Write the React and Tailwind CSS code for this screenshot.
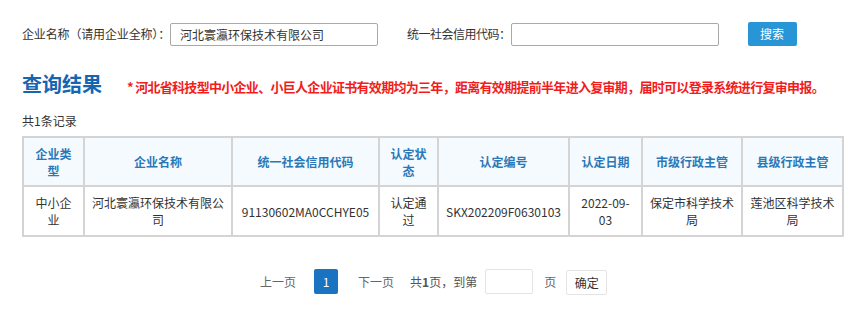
import React from 'react';

const font = { fontFamily: '"Microsoft YaHei","Noto Sans CJK SC","Noto Sans",sans-serif' };

const headers = [
  { label: '企业类型', w: 'w-[61px]' },
  { label: '企业名称', w: 'w-[148px]' },
  { label: '统一社会信用代码', w: 'w-[147px]' },
  { label: '认定状态', w: 'w-[59px]' },
  { label: '认定编号', w: 'w-[131px]' },
  { label: '认定日期', w: 'w-[73px]' },
  { label: '市级行政主管', w: 'w-[100px]' },
  { label: '县级行政主管', w: 'w-[101px]' },
];

const row = [
  '中小企业',
  '河北寰瀛环保技术有限公司',
  '91130602MA0CCHYE05',
  '认定通过',
  'SKX202209F0630103',
  '2022-09-03',
  '保定市科学技术局',
  '莲池区科学技术局',
];

export default function App() {
  return (
    <div className="w-[859px] h-[325px] bg-white text-[12px] text-[#333]" style={font}>
      {/* search bar */}
      <div className="flex items-center pt-[22px] pl-[22px] h-[46px]">
        <span className="shrink-0 whitespace-nowrap tracking-[-0.15px]">企业名称（请用企业全称）：</span>
        <input
          className="w-[208px] h-[23px] border border-[#a9a9a9] rounded-[2px] px-[9px] text-[12px] text-[#333] outline-none"
          defaultValue="河北寰瀛环保技术有限公司"
          style={font}
        />
        <span className="ml-[29px] shrink-0 whitespace-nowrap tracking-[-0.5px]">统一社会信用代码：</span>
        <input className="w-[208px] h-[23px] border border-[#a9a9a9] rounded-[2px] outline-none" />
        <button className="ml-[29px] w-[49px] h-[24px] bg-[#2896d6] text-white text-[12px] rounded-[2px]" style={font}>
          搜索
        </button>
      </div>

      {/* heading */}
      <div className="flex items-center pl-[22px] mt-[25px] h-[26px]">
        <h2 className="shrink-0 whitespace-nowrap text-[20px] font-bold text-[#1565b0] leading-[26px]">查询结果</h2>
        <p className="ml-[25px] mt-[6px] whitespace-nowrap text-[13px] font-bold tracking-[-0.7px] text-[#f21c1c] leading-[16px]">
          * 河北省科技型中小企业、小巨人企业证书有效期均为三年，距离有效期提前半年进入复审期，届时可以登录系统进行复审申报。
        </p>
      </div>

      <div className="pl-[22px] mt-[16px] leading-[16px]">共1条记录</div>

      {/* table */}
      <div className="pl-[22px] mt-[7px]">
        <table className="w-[820px] table-fixed border-collapse border-2 border-[#d4d4d4]">
          <thead>
            <tr className="h-[49px] bg-[#f5faff]">
              {headers.map((h) => (
                <th key={h.label} className={`${h.w} border-2 border-[#d4d4d4] px-[6px] text-[12px] font-bold text-[#2a78b8] leading-[17px]`}>
                  {h.label}
                </th>
              ))}
            </tr>
          </thead>
          <tbody>
            <tr className="h-[50px]">
              {row.map((c, i) => (
                <td key={i} className="border-2 border-[#d4d4d4] px-[6px] text-center text-[12px] text-[#333] leading-[17px]">
                  {c}
                </td>
              ))}
            </tr>
          </tbody>
        </table>
      </div>

      {/* pagination */}
      <div className="flex items-center mt-[31px] pl-[260px] text-[12px] text-[#666]">
        <span>上一页</span>
        <span className="ml-[18px] w-[24px] h-[25px] flex items-center justify-center bg-[#1a73c0] text-white rounded-[2px]">1</span>
        <span className="ml-[20px]">下一页</span>
        <span className="ml-[16px] text-[#555]">
          共<b>1</b>页，到第
        </span>
        <input className="ml-[8px] w-[48px] h-[25px] border border-[#e4e4e4] rounded-[2px] outline-none" />
        <span className="ml-[11px]">页</span>
        <button className="ml-[10px] w-[41px] h-[25px] border border-[#e4e4e4] rounded-[2px] text-[#333] text-[12px] mt-[2px]" style={font}>
          确定
        </button>
      </div>
    </div>
  );
}
